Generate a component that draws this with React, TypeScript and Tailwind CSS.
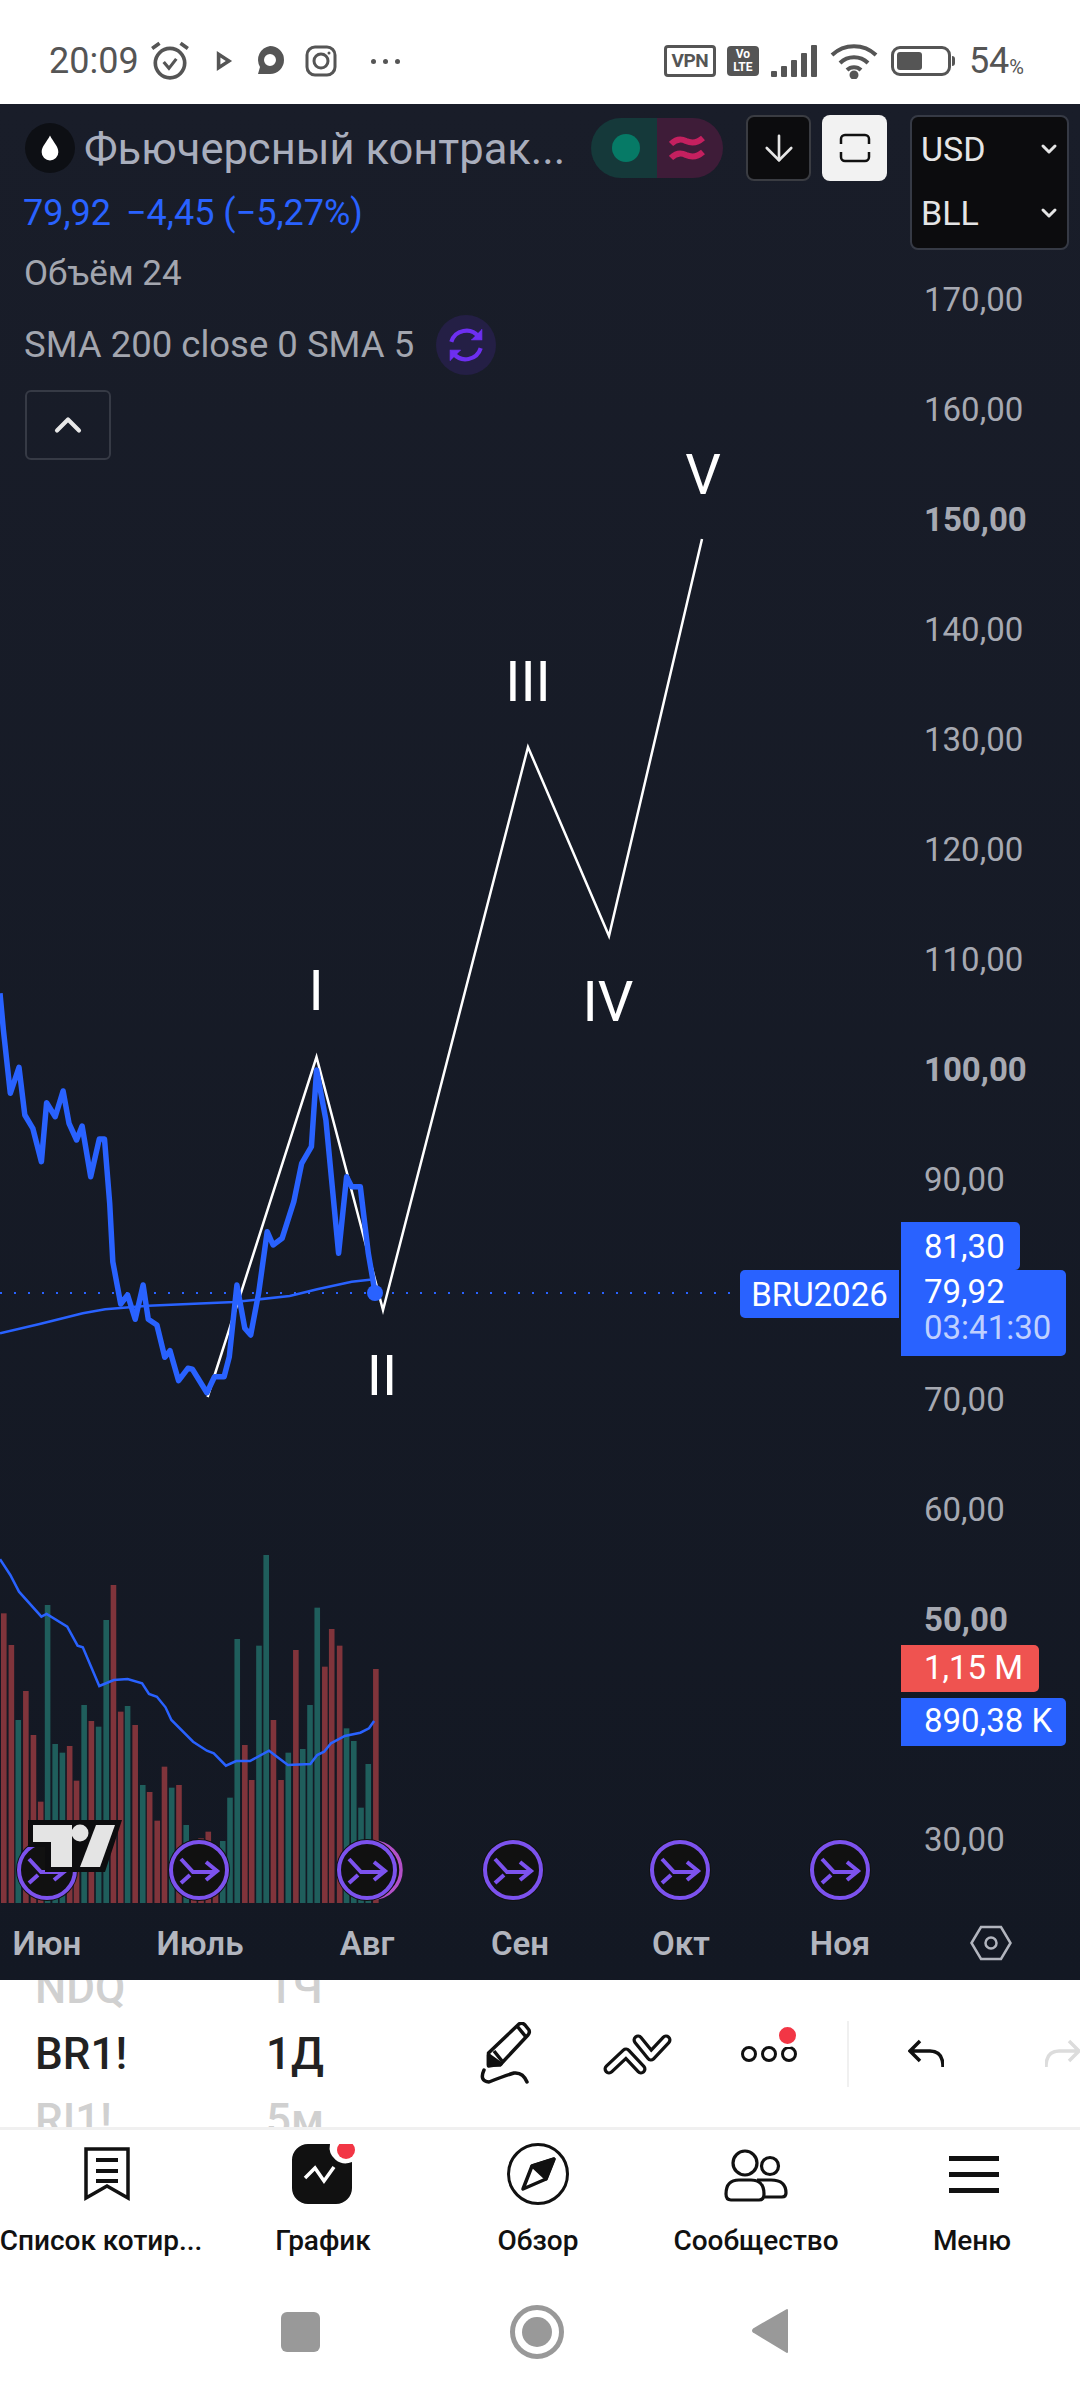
import { ChevronDown, ChevronUp, ArrowDown } from "lucide-react";

// price line, sma line and volume come from crops of the chart: zoom x / 2.9, zoom y / 3
const pricePoints: [number, number][] = [
  [0, 100], [10, 210], [30, 400], [55, 322], [72, 465], [95, 505], [120, 605], [135, 428], [160, 470], [183, 393],
  [200, 490], [222, 540], [238, 498], [263, 650], [288, 537], [303, 537], [318, 730], [327, 905], [350, 1032],
  [370, 1005], [392, 1078], [415, 975], [430, 1078], [455, 1095], [478, 1192], [493, 1172], [518, 1262], [545, 1225],
  [558, 1228], [600, 1298], [622, 1250], [650, 1250], [665, 1190], [687, 975], [710, 1105], [727, 1125], [750, 1000],
  [775, 815], [792, 855], [818, 835], [852, 725], [875, 610], [903, 560], [918, 330], [945, 480], [982, 880],
  [1005, 650], [1020, 680], [1045, 680], [1068, 880], [1088, 1000],
];
const smaPoints: [number, number][] = [
  [0, 1120], [115, 1092], [240, 1060], [305, 1048], [430, 1037], [680, 1026], [840, 1008], [920, 988], [1020, 965], [1085, 958],
];
const volumeMa: [number, number][] = [
  [0, 178], [30, 225], [55, 275], [120, 350], [135, 342], [195, 380], [225, 437], [240, 442], [288, 558], [330, 540],
  [370, 537], [412, 550], [432, 582], [455, 590], [480, 622], [497, 660], [560, 725], [600, 752], [620, 760], [655, 797],
  [685, 783], [725, 783], [780, 752], [835, 795], [900, 792], [920, 765], [940, 755], [960, 730], [1000, 708], [1045, 698],
  [1070, 685], [1085, 663],
];
const bars: [number, number, "r" | "g"][] = [
  [11, 340, "r"], [33, 435, "r"], [53, 660, "g"], [75, 573, "r"], [97, 705, "r"], [118, 905, "r"], [138, 315, "g"],
  [160, 732, "g"], [181, 758, "g"], [202, 738, "r"], [222, 842, "r"], [244, 615, "g"], [265, 663, "r"], [286, 680, "g"],
  [308, 360, "g"], [329, 255, "r"], [350, 635, "r"], [370, 618, "g"], [392, 675, "r"], [414, 855, "g"], [434, 876, "r"],
  [456, 962, "r"], [477, 800, "r"], [498, 863, "g"], [519, 855, "r"], [540, 975, "g"], [562, 1030, "r"], [583, 1015, "r"],
  [604, 995, "r"], [625, 1040, "r"], [646, 1023, "g"], [667, 893, "g"], [688, 417, "g"], [710, 735, "r"], [730, 840, "r"],
  [751, 437, "g"], [772, 165, "g"], [793, 660, "r"], [815, 840, "r"], [836, 758, "g"], [858, 450, "r"], [878, 747, "g"],
  [899, 615, "g"], [920, 323, "g"], [942, 500, "r"], [962, 387, "r"], [985, 437, "r"], [1005, 685, "g"], [1026, 723, "g"],
  [1047, 923, "g"], [1068, 792, "g"], [1090, 507, "r"],
];

const toLine = (pts: [number, number][], top: number) =>
  pts.map(([x, y]) => `${(x / 2.9).toFixed(1)},${(y / 3 + top).toFixed(1)}`).join(" ");

const ticks = ["170,00", "160,00", "150,00", "140,00", "130,00", "120,00", "110,00", "100,00", "90,00", "", "70,00", "60,00", "50,00", "", "30,00"];
const boldTicks = ["150,00", "100,00", "50,00"];

function EventIcon({ className, double }: { className: string; double?: boolean }) {
  return (
    <svg viewBox="0 0 72 64" className={`absolute w-[72px] h-[64px] ${className}`}>
      {double && <circle cx="38" cy="32" r="28" fill="#111" stroke="#b350c8" strokeWidth="3.5" />}
      <circle cx="32" cy="32" r="31" fill="#111" />
      <circle cx="32" cy="32" r="28" fill="#111" stroke="#7c52ee" strokeWidth="4" />
      <path d="M14 21 L26 34 H49 M39 24 L50 33 L39 42 M14 45 L23 37" fill="none" stroke="#7c52ee" strokeWidth="4" />
    </svg>
  );
}

function StatusBar() {
  return (
    <div className="h-[104px] bg-white flex items-center pt-[18px] text-[#555] relative">
      <span className="ml-[49px] text-[36px] leading-none w-[96px]">20:09</span>
      <svg viewBox="0 0 40 40" className="w-[42px] h-[42px] ml-[4px] shrink-0" fill="none" stroke="#555" strokeWidth="3.5">
        <circle cx="20" cy="22" r="14" />
        <path d="M3 8 L10 3 M37 8 L30 3" />
        <path d="M14 21 L19 27 L26 18" strokeWidth="3" />
      </svg>
      <svg viewBox="0 0 20 24" className="w-[18px] h-[22px] ml-[24px] shrink-0">
        <path d="M2 1 L19 12 L2 23 Z M6 8 V16 L12 12 Z" fill="#555" fillRule="evenodd" />
      </svg>
      <svg viewBox="0 0 30 32" className="w-[30px] h-[32px] ml-[22px] shrink-0">
        <path d="M15 1 A14 14 0 0 1 15 29 H3 L5 22 A14 14 0 0 1 15 1 Z M15 9 A6 6 0 1 0 15 21 A6 6 0 0 0 15 9 Z" fill="#555" fillRule="evenodd" />
      </svg>
      <svg viewBox="0 0 32 32" className="w-[32px] h-[32px] ml-[20px] shrink-0" fill="none" stroke="#555" strokeWidth="3">
        <rect x="2" y="2" width="28" height="28" rx="8" />
        <circle cx="16" cy="16" r="7" />
        <circle cx="24" cy="8" r="1.5" fill="#555" stroke="none" />
      </svg>
      <div className="flex gap-[7px] ml-[34px]">
        <span className="w-[5px] h-[5px] rounded-full bg-[#555]" />
        <span className="w-[5px] h-[5px] rounded-full bg-[#555]" />
        <span className="w-[5px] h-[5px] rounded-full bg-[#555]" />
      </div>
      <div className="ml-auto flex items-center">
        <span className="w-[52px] h-[32px] border-[3px] border-[#555] rounded-[4px] text-[19px] font-bold flex items-center justify-center tracking-tight">VPN</span>
        <span className="w-[32px] h-[30px] ml-[11px] bg-[#555] rounded-[4px] text-white text-[12px] font-bold leading-[13px] flex flex-col items-center justify-center">
          <span>Vo</span>
          <span>LTE</span>
        </span>
        <svg viewBox="0 0 46 32" className="w-[46px] h-[32px] ml-[12px]" fill="#555">
          <rect x="0" y="26" width="6" height="6" rx="1" />
          <rect x="10" y="21" width="6" height="11" rx="1" />
          <rect x="20" y="15" width="6" height="17" rx="1" />
          <rect x="30" y="8" width="6" height="24" rx="1" />
          <rect x="40" y="0" width="6" height="32" rx="1" />
        </svg>
        <svg viewBox="0 0 48 36" className="w-[48px] h-[36px] ml-[13px]" fill="none" stroke="#555" strokeWidth="4">
          <path d="M2 12 A32 32 0 0 1 46 12" />
          <path d="M10 20 A20 20 0 0 1 38 20" />
          <path d="M17 27 A10 10 0 0 1 31 27" />
          <circle cx="24" cy="32" r="2.5" fill="#555" />
        </svg>
        <div className="ml-[13px] flex items-center">
          <div className="w-[60px] h-[30px] border-[3px] border-[#555] rounded-[9px] p-[3px]">
            <div className="w-[25px] h-full bg-[#555] rounded-[3px]" />
          </div>
          <div className="w-[3px] h-[10px] bg-[#555] ml-[1px] rounded-r-sm" />
        </div>
        <span className="ml-[14px] text-[36px] leading-none">54</span>
        <span className="mr-[56px] text-[20px] leading-none mt-[12px]">%</span>
      </div>
    </div>
  );
}

function Legend() {
  return (
    <div className="flex-1 min-w-0 pl-[25px] pt-[11px]">
      <div className="flex items-center h-[66px]">
        <div className="w-[50px] h-[50px] rounded-full bg-[#0d0f14] flex items-center justify-center shrink-0">
          <svg viewBox="0 0 24 32" className="w-[20px] h-[28px]">
            <path d="M12 1 C16 9 22 14 22 21 A10 10 0 0 1 2 21 C2 14 8 9 12 1 Z" fill="#fff" />
          </svg>
        </div>
        <span className="ml-[9px] mt-[3px] w-[507px] text-[43.5px] leading-none text-[#a9aebd] whitespace-nowrap">Фьючерсный контрак...</span>
        <div className="w-[132px] h-[60px] rounded-full overflow-hidden flex shrink-0">
          <div className="w-[66px] bg-[#15393a] flex items-center justify-center pl-[4px]">
            <span className="w-[28px] h-[28px] rounded-full bg-[#067a66]" />
          </div>
          <div className="flex-1 bg-[#3e1c38] flex items-center justify-center pr-[6px]">
            <svg viewBox="0 0 36 28" className="w-[36px] h-[28px]" fill="none" stroke="#c4205f" strokeWidth="6">
              <path d="M2 10 Q9 3 17 7 Q26 11 34 4" />
              <path d="M2 24 Q9 17 17 21 Q26 25 34 18" />
            </svg>
          </div>
        </div>
        <div className="ml-[23px] w-[65px] h-[66px] bg-[#0c0c0e] border-2 border-[#3a3c42] rounded-[8px] flex items-center justify-center shrink-0">
          <ArrowDown className="w-[42px] h-[42px] text-[#e6e6e6]" strokeWidth={1.5} />
        </div>
        <div className="ml-[11px] w-[65px] h-[66px] bg-[#f2f2f2] rounded-[8px] flex items-center justify-center shrink-0">
          <svg viewBox="0 0 32 32" className="w-[32px] h-[32px]" fill="none" stroke="#111" strokeWidth="2.5">
            <path d="M2 12 V7 A4 4 0 0 1 6 3 H26 A4 4 0 0 1 30 7 V12 M2 20 V25 A4 4 0 0 0 6 29 H26 A4 4 0 0 0 30 25 V20" />
          </svg>
        </div>
      </div>
      <div className="h-[50px] mt-[7px] -ml-[2px] flex items-center text-[36px] leading-none text-[#2962ff] whitespace-nowrap">
        <span>79,92</span>
        <span className="ml-[15px]">−4,45 (−5,27%)</span>
      </div>
      <div className="h-[50px] mt-[10px] -ml-[1px] flex items-center text-[35px] leading-none text-[#a3a6af]">Объём 24</div>
      <div className="h-[60px] mt-[17px] -ml-[1px] flex items-center">
        <span className="text-[36.5px] leading-none text-[#a3a6af] whitespace-nowrap w-[412px]">SMA 200 close 0 SMA 5</span>
        <div className="w-[60px] h-[60px] rounded-full bg-[#241f45] flex items-center justify-center">
          <svg viewBox="0 0 40 40" className="w-[42px] h-[42px]" fill="none" stroke="#6d2ff0" strokeWidth="4">
            <path d="M6 17 A15 15 0 0 1 32 12 M34 23 A15 15 0 0 1 8 28" />
            <path d="M35 5 V15 H25 M5 35 V25 H15" fill="#6d2ff0" strokeWidth="1" />
          </svg>
        </div>
      </div>
      <div className="w-[86px] h-[70px] mt-[15px] border-2 border-[#363a45] rounded-[6px] flex items-center justify-center">
        <ChevronUp className="w-[44px] h-[44px] text-[#e8e8e8]" strokeWidth={2.25} />
      </div>
    </div>
  );
}

function PriceAxis() {
  return (
    <div className="w-[170px] shrink-0">
      <div className="mt-[11px] w-[159px] h-[135px] bg-[#0c0c0e] border-2 border-[#363a45] rounded-[8px] text-[34px] leading-none text-[#e5e5e5] flex flex-col justify-around pl-[9px] pr-[6px] pb-[3px]">
        <div className="flex items-center justify-between">
          <span>USD</span>
          <ChevronDown className="w-[24px] h-[24px]" strokeWidth={3} />
        </div>
        <div className="flex items-center justify-between">
          <span>BLL</span>
          <ChevronDown className="w-[24px] h-[24px]" strokeWidth={3} />
        </div>
      </div>
      <div className="-mt-[6px] pl-[14px]">
        {ticks.map((tick, i) => (
          <div
            key={i}
            className={`h-[110px] flex items-center text-[33px] leading-none text-[#a6a9b2] ${boldTicks.includes(tick) ? "font-bold" : ""}`}
          >
            {tick}
          </div>
        ))}
      </div>
    </div>
  );
}

function ChartDrawing() {
  return (
    <svg viewBox="0 104 1080 1876" className="absolute inset-0 w-full h-full" fill="none">
      {bars.map(([x, top, c]) => (
        <rect
          key={x}
          x={x / 2.9 - 2.8}
          y={top / 3 + 1500}
          width="5.6"
          height={1903 - (top / 3 + 1500)}
          fill={c === "r" ? "#80343b" : "#1f5e5c"}
        />
      ))}
      <polyline points={toLine(volumeMa, 1500)} stroke="#2962ff" strokeWidth="2.5" />
      <line x1="0" y1="1293" x2="740" y2="1293" stroke="#2962ff" strokeWidth="2" strokeDasharray="2 12" />
      <polyline points="207.6,1397 316.5,1057 383,1310 528,747 609,936 702,539" stroke="#fff" strokeWidth="2.5" />
      <polyline points={toLine(smaPoints, 960)} stroke="#2962ff" strokeWidth="2.5" />
      <polyline points={toLine(pricePoints, 960)} stroke="#2962ff" strokeWidth="5.5" strokeLinejoin="round" />
      <circle cx="375" cy="1293" r="8" fill="#2962ff" />
    </svg>
  );
}

function TvLogo() {
  return (
    <svg viewBox="28 1820 94 52" className="absolute left-[28px] top-[1716px] w-[94px] h-[52px]">
      <polygon points="28,1820 122,1820 105,1872 45,1872 45,1847 28,1847" fill="#0d0d0f" />
      <path d="M33 1825 H72 V1867 H51 V1842 H33 Z" fill="#e4e4e4" />
      <circle cx="80" cy="1833" r="8.5" fill="#e4e4e4" />
      <polygon points="96,1825 115,1825 100,1867 80,1867" fill="#e4e4e4" />
    </svg>
  );
}

function Chart() {
  return (
    <div className="relative h-[1876px] bg-gradient-to-b from-[#191d29] to-[#131823] overflow-hidden flex flex-col">
      <ChartDrawing />

      <div className="relative flex flex-1 min-h-0">
        <Legend />
        <PriceAxis />
      </div>

      {/* time axis */}
      <div className="relative h-[74px] shrink-0 grid grid-cols-[94px_212px_122px_184px_138px_180px_1fr] items-center text-center text-[33px] leading-none font-semibold text-[#b2b5be]">
        <span>Июн</span>
        <span>Июль</span>
        <span>Авг</span>
        <span>Сен</span>
        <span>Окт</span>
        <span>Ноя</span>
        <div className="pr-[28px] flex justify-center">
          <svg viewBox="0 0 42 36" className="w-[42px] h-[36px]" fill="none" stroke="#b2b5be" strokeWidth="2.5">
            <path d="M1.5 18 L11 2 H31 L40.5 18 L31 34 H11 Z" />
            <circle cx="21" cy="18" r="5.5" />
          </svg>
        </div>
      </div>

      {/* wave labels */}
      <span className="absolute left-[316px] top-[887px] -translate-x-1/2 -translate-y-1/2 text-[56px] leading-none text-white">I</span>
      <span className="absolute left-[382px] top-[1272px] -translate-x-1/2 -translate-y-1/2 text-[56px] leading-none text-white">II</span>
      <span className="absolute left-[528px] top-[578px] -translate-x-1/2 -translate-y-1/2 text-[56px] leading-none text-white">III</span>
      <span className="absolute left-[608px] top-[898px] -translate-x-1/2 -translate-y-1/2 text-[56px] leading-none text-white">IV</span>
      <span className="absolute left-[703px] top-[371px] -translate-x-1/2 -translate-y-1/2 text-[56px] leading-none text-white">V</span>

      {/* event markers */}
      <EventIcon className="left-[15px] top-[1734px]" />
      <EventIcon className="left-[167px] top-[1734px]" />
      <EventIcon className="left-[335px] top-[1734px]" double />
      <EventIcon className="left-[481px] top-[1734px]" />
      <EventIcon className="left-[648px] top-[1734px]" />
      <EventIcon className="left-[808px] top-[1734px]" />
      <TvLogo />

      {/* price tags */}
      <div className="absolute left-[901px] top-[1118px] w-[119px] h-[48px] bg-[#2962ff] rounded-r-[5px] pl-[23px] flex items-center text-[33px] leading-none text-white">81,30</div>
      <div className="absolute left-[740px] top-[1166px] w-[159px] h-[48px] bg-[#2962ff] rounded-l-[5px] flex items-center justify-center text-[33px] leading-none text-white">BRU2026</div>
      <div className="absolute left-[901px] top-[1166px] w-[165px] h-[86px] bg-[#2962ff] rounded-r-[5px] pl-[23px] pb-[6px] flex flex-col justify-center gap-[4px] text-[33px] leading-[32px] text-white">
        <span>79,92</span>
        <span className="text-[#bfd0ff]">03:41:30</span>
      </div>
      <div className="absolute left-[901px] top-[1541px] w-[138px] h-[47px] bg-[#ef5350] rounded-r-[5px] pl-[23px] pb-[3px] flex items-center text-[33px] leading-none text-white">1,15 M</div>
      <div className="absolute left-[901px] top-[1594px] w-[165px] h-[48px] bg-[#2962ff] rounded-r-[5px] pl-[23px] pb-[3px] flex items-center text-[33px] leading-none text-white whitespace-nowrap">890,38 K</div>
    </div>
  );
}

function Toolbar() {
  return (
    <div className="h-[147px] bg-white flex overflow-hidden">
      <div className="w-[230px] pl-[35px] flex flex-col justify-center shrink-0 text-[44px] font-medium">
        <div className="h-[66px] flex items-center shrink-0 text-[#d0d0d0]">NDQ</div>
        <div className="h-[66px] flex items-center shrink-0 text-[#222]">BR1!</div>
        <div className="h-[66px] flex items-center shrink-0 text-[#d0d0d0]">RI1!</div>
      </div>
      <div className="w-[130px] flex flex-col justify-center items-center shrink-0 text-[44px] font-medium">
        <div className="h-[66px] flex items-center shrink-0 text-[#d0d0d0]">1Ч</div>
        <div className="h-[66px] flex items-center shrink-0 text-[#222]">1Д</div>
        <div className="h-[66px] flex items-center shrink-0 text-[#d0d0d0]">5м</div>
      </div>
      <div className="ml-[79px] w-[132px] flex items-center justify-center shrink-0">
        <svg viewBox="478 2024 56 64" className="w-[56px] h-[64px]" fill="none" stroke="#111" strokeWidth="3.5" strokeLinejoin="round">
          <path d="M489.5 2055 L520 2026 Q523 2024 526 2027 L530 2032 Q531 2035 529 2037 L501 2067 H489.5 Z" />
          <path d="M518 2028 L527 2039 M495 2053 L503 2063" />
          <path d="M489.5 2057 L502 2066 L489.5 2068 Z" fill="#111" />
          <path d="M485 2072 Q480 2083 490 2084 Q505 2078 515 2075 Q524 2074 528 2084" strokeLinecap="round" />
        </svg>
      </div>
      <div className="w-[132px] flex items-center justify-center shrink-0">
        <svg viewBox="600 2030 72 46" className="w-[72px] h-[46px]" fill="none" strokeLinejoin="round" strokeLinecap="round">
          <path d="M608 2068 L625 2052 L640 2068" stroke="#111" strokeWidth="11" />
          <path d="M608 2068 L625 2052 L640 2068" stroke="#fff" strokeWidth="4.5" />
          <path d="M637 2039 L650 2055 L665 2039" stroke="#111" strokeWidth="11" />
          <path d="M637 2039 L650 2055 L665 2039" stroke="#fff" strokeWidth="4.5" />
        </svg>
      </div>
      <div className="w-[132px] flex items-center justify-center shrink-0 relative">
        <div className="flex gap-[4px]">
          <span className="w-[16px] h-[16px] rounded-full border-[3.5px] border-[#111]" />
          <span className="w-[16px] h-[16px] rounded-full border-[3.5px] border-[#111]" />
          <span className="w-[16px] h-[16px] rounded-full border-[3.5px] border-[#111]" />
        </div>
        <span className="absolute left-[73px] top-[44px] w-[23px] h-[23px] rounded-full bg-[#f23645] border-[3px] border-white" />
      </div>
      <div className="ml-[12px] self-center w-[2px] h-[66px] bg-[#f0f0f0] shrink-0" />
      <div className="ml-[12px] w-[130px] flex items-center justify-center shrink-0">
        <svg viewBox="0 0 36 30" className="w-[36px] h-[30px]" fill="none" stroke="#111" strokeWidth="3.5">
          <path d="M12 2 L2 12 L12 22 M2 12 H22 Q35 12 35 28" />
        </svg>
      </div>
      <div className="ml-[12px] w-[120px] flex items-center justify-center shrink-0">
        <svg viewBox="0 0 36 30" className="w-[36px] h-[30px]" fill="none" stroke="#dcdcdc" strokeWidth="3.5">
          <path d="M24 2 L34 12 L24 22 M34 12 H14 Q1 12 1 28" />
        </svg>
      </div>
    </div>
  );
}

function BottomNav() {
  return (
    <div className="border-t-[3px] border-[#f0f0f0] bg-white grid grid-cols-[214px_218px_212px_224px_1fr] h-[137px] pt-[14px] text-[#111]">
      <div className="flex flex-col items-center">
        <svg viewBox="0 0 46 60" className="w-[46px] h-[60px]" fill="none" stroke="#111" strokeWidth="3.5">
          <path d="M2 5 H44 V54 L23 42 L2 54 Z" />
          <path d="M12 16 H34 M12 27 H34 M12 37 H34" strokeWidth="4" />
        </svg>
        <span className="mt-[23px] mr-[12px] text-[28px] leading-none font-medium whitespace-nowrap">Список котир...</span>
      </div>
      <div className="flex flex-col items-center relative">
        <svg viewBox="0 0 70 60" className="w-[70px] h-[60px]">
          <path d="M20 0 H42 A16 16 0 0 0 64 18 V44 A16 16 0 0 1 48 60 H20 A16 16 0 0 1 4 44 V16 A16 16 0 0 1 20 0 Z" fill="#111" />
          <circle cx="58" cy="6" r="9" fill="#f23645" />
          <path d="M17 34 L27 24 L36 37 L46 23" fill="none" stroke="#fff" strokeWidth="3.5" />
        </svg>
        <span className="mt-[23px] text-[28px] leading-none font-medium">График</span>
      </div>
      <div className="flex flex-col items-center">
        <svg viewBox="0 0 62 62" className="w-[62px] h-[62px] -my-[1px]" fill="none" stroke="#111" strokeWidth="3">
          <circle cx="31" cy="31" r="29.5" />
          <path d="M47 16 L25 23 L16 46 L39 36 Z" strokeWidth="3.5" strokeLinejoin="round" />
          <path d="M47 16 L25 23 L39 36 Z" fill="#111" stroke="#111" strokeLinejoin="round" />
        </svg>
        <span className="mt-[23px] text-[28px] leading-none font-medium">Обзор</span>
      </div>
      <div className="flex flex-col items-center">
        <svg viewBox="722 2144 70 60" className="w-[70px] h-[60px]" fill="none" stroke="#111" strokeWidth="3.2">
          <circle cx="746" cy="2163" r="12" />
          <circle cx="771" cy="2166" r="8.5" />
          <path d="M727 2194 Q727 2180 740 2180 H752 Q765 2180 765 2194 Q765 2200 760 2200 H732 Q727 2200 727 2194 Z" />
          <path d="M758 2180 H772 Q787 2180 787 2193 Q787 2197 783 2197 H766" />
        </svg>
        <span className="mt-[23px] text-[28px] leading-none font-medium">Сообщество</span>
      </div>
      <div className="flex flex-col items-center">
        <div className="h-[60px] w-[50px] flex flex-col justify-center gap-[11px]">
          <span className="h-[5px] bg-[#111]" />
          <span className="h-[5px] bg-[#111]" />
          <span className="h-[5px] bg-[#111]" />
        </div>
        <span className="mt-[23px] mr-[4px] text-[28px] leading-none font-medium">Меню</span>
      </div>
    </div>
  );
}

function AndroidNav() {
  return (
    <div className="flex-1 bg-white flex items-start pt-[48px]">
      <div className="ml-[281px] w-[39px] h-[40px] bg-[#999] rounded-[6px]" />
      <div className="ml-[190px] -mt-[7px] w-[54px] h-[54px] rounded-full border-[5px] border-[#999] flex items-center justify-center">
        <span className="w-[30px] h-[30px] rounded-full bg-[#999]" />
      </div>
      <svg viewBox="0 0 38 46" className="ml-[187px] -mt-[4px] w-[38px] h-[46px]">
        <path d="M36 2 V44 L3 24 Q1 23 3 21 Z" fill="#999" stroke="#999" strokeWidth="2" strokeLinejoin="round" />
      </svg>
    </div>
  );
}

export default function App() {
  return (
    <div className="w-[1080px] h-[2400px] bg-white flex flex-col overflow-hidden font-['Roboto',sans-serif]">
      <StatusBar />
      <Chart />
      <Toolbar />
      <BottomNav />
      <AndroidNav />
    </div>
  );
}
